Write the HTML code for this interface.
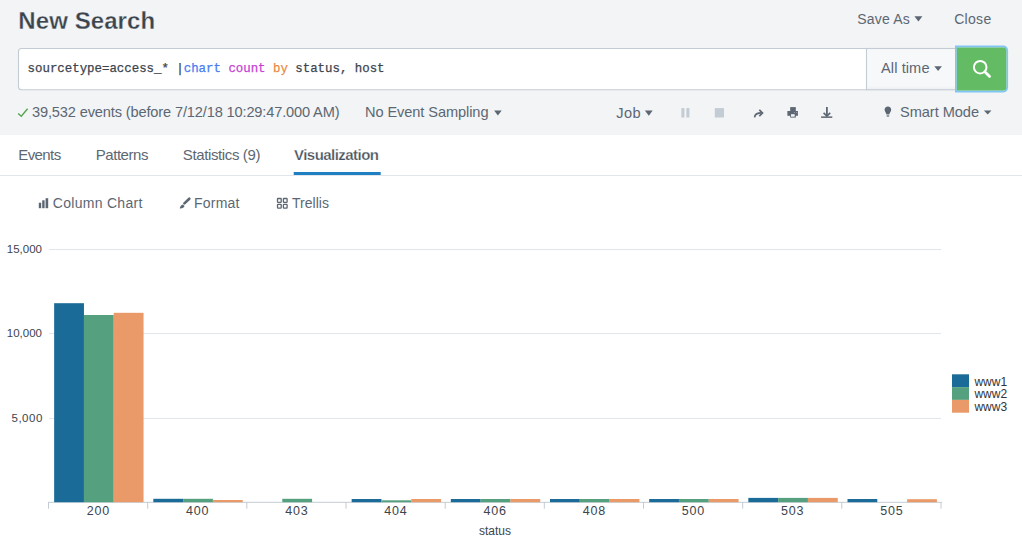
<!DOCTYPE html>
<html><head><meta charset="utf-8">
<style>
html,body{margin:0;padding:0;}
body{width:1022px;height:549px;overflow:hidden;position:relative;background:#fff;font-family:"Liberation Sans",sans-serif;}
svg{position:absolute;left:0;top:0;}
text{font-family:"Liberation Sans",sans-serif;white-space:pre;}
.g{fill:#5c6773;font-size:14px;}
.m{font-family:"Liberation Mono",monospace;font-size:12.4px;}
</style></head><body>
<svg width="1022" height="549" viewBox="0 0 1022 549">
<!-- header -->
<rect x="0" y="0" width="1022" height="135" fill="#f2f4f5"/>
<text x="18.3" y="28.8" font-size="24" font-weight="700" fill="#3c444d" stroke="#f2f4f5" stroke-width="0.3" textLength="136.8" lengthAdjust="spacing">New Search</text>
<text class="g" x="857.2" y="23.8" textLength="52.5" lengthAdjust="spacing">Save As</text>
<path d="M914.4 16.3 H922.4 L918.4 21.6 Z" fill="#5c6773"/>
<text class="g" x="954.2" y="23.8" textLength="37" lengthAdjust="spacing">Close</text>

<!-- search bar -->
<path d="M866.5 48.5 H21.5 A3 3 0 0 0 18.5 51.5 V86.8 A3 3 0 0 0 21.5 89.8 H866.5" fill="#fff" stroke="#c3cbd4" stroke-width="1.1"/>
<defs><linearGradient id="atg" x1="0" y1="0" x2="0" y2="1"><stop offset="0" stop-color="#f7f8fa"/><stop offset="0.9" stop-color="#f7f8fa"/><stop offset="1" stop-color="#eceef1"/></linearGradient></defs>
<rect x="866.5" y="48.5" width="92" height="41.3" fill="url(#atg)" stroke="#c3cbd4" stroke-width="1.1"/>
<text class="m" x="27.6" y="71.9" fill="#3c444d" stroke="#3c444d" stroke-width="0.25">sourcetype=access_* |<tspan fill="#4a7cf2" stroke="#4a7cf2">chart</tspan> <tspan fill="#c73fd3" stroke="#c73fd3">count</tspan> <tspan fill="#ea8a44" stroke="#ea8a44">by</tspan> status, host</text>
<text class="g" x="881" y="73.4" style="font-size:14.6px" textLength="48.5" lengthAdjust="spacing">All time</text>
<path d="M934.3 66.2 H941.9 L938.1 71 Z" fill="#5c6773"/>
<path d="M955.9 46.5 H1003.3 A3.9 3.9 0 0 1 1007.2 50.4 V87.6 A3.9 3.9 0 0 1 1003.3 91.5 H955.9 Z" fill="none" stroke="#80c6f4" stroke-width="1.8"/>
<path d="M956.8 47.4 H1003.3 A3 3 0 0 1 1006.3 50.4 V87.5 A3 3 0 0 1 1003.3 90.5 H956.8 Z" fill="#63bb63"/>
<circle cx="980.2" cy="67.2" r="6.3" fill="none" stroke="#fff" stroke-width="2"/>
<path d="M984.8 71.8 L989.6 76.4" stroke="#fff" stroke-width="2.8" stroke-linecap="round"/>

<!-- status row -->
<path d="M18.2 113.4 L21.3 116.3 L27.6 108.7" fill="none" stroke="#56a552" stroke-width="1.4"/>
<text class="g" x="32" y="117" style="font-size:14.6px" textLength="307.6" lengthAdjust="spacing">39,532 events (before 7/12/18 10:29:47.000 AM)</text>
<text class="g" x="365" y="117" style="font-size:14.6px" textLength="123.5" lengthAdjust="spacing">No Event Sampling</text>
<path d="M494.1 110.6 H501.7 L497.9 115.6 Z" fill="#5c6773"/>
<text class="g" x="616.2" y="117.6" style="font-size:14.6px" textLength="24.5" lengthAdjust="spacing">Job</text>
<path d="M644.9 110.6 H652.7 L648.8 115.7 Z" fill="#5c6773"/>
<!-- pause / stop -->
<rect x="681.4" y="108.1" width="3" height="9.4" fill="#c3cbd4"/>
<rect x="686.4" y="108.1" width="3" height="9.4" fill="#c3cbd4"/>
<rect x="714.8" y="108.1" width="9.2" height="9.4" fill="#c3cbd4"/>
<!-- share -->
<path d="M754.6 117.4 C754.7 114.3 756.6 112.9 761.8 112.9" fill="none" stroke="#5c6773" stroke-width="1.7"/>
<path d="M759.3 109.8 L762.5 113 L759.3 116.2" fill="none" stroke="#5c6773" stroke-width="1.7"/>
<!-- print -->
<rect x="790.2" y="107.1" width="5.6" height="10.5" fill="#5c6773"/>
<rect x="787.4" y="111" width="10.5" height="4.8" fill="#5c6773"/>
<rect x="791" y="114.2" width="3.7" height="2.5" fill="#f2f4f5"/>
<rect x="794.1" y="112.1" width="0.9" height="0.9" fill="#9aa4ae"/>
<rect x="796.1" y="112.1" width="0.9" height="0.9" fill="#9aa4ae"/>
<!-- download -->
<path d="M826.9 107 V116" stroke="#5c6773" stroke-width="1.8"/>
<path d="M823.6 112.9 L826.9 116 L830.2 112.9" fill="none" stroke="#5c6773" stroke-width="1.7"/>
<rect x="821.1" y="116.4" width="11.2" height="1.5" fill="#5c6773"/>
<!-- bulb -->
<path d="M887.9 106.5 C889.9 106.5 891.2 107.9 891.2 109.7 C891.2 111.3 889.8 112.4 889.4 114.2 L886.4 114.2 C886 112.4 884.6 111.3 884.6 109.7 C884.6 107.9 885.9 106.5 887.9 106.5 Z" fill="#5c6773"/>
<rect x="886.5" y="114.6" width="2.8" height="0.6" fill="#8f98a2"/>
<rect x="886.7" y="115.4" width="2.4" height="1.2" fill="#5c6773"/>
<text class="g" x="900" y="117" style="font-size:14.6px" textLength="79" lengthAdjust="spacing">Smart Mode</text>
<path d="M983.9 110.4 H991.5 L987.7 114.6 Z" fill="#5c6773"/>

<!-- tabs -->
<rect x="0" y="175" width="1022" height="1" fill="#e1e6eb"/>
<text class="g" x="18.2" y="160" style="font-size:15px" textLength="43" lengthAdjust="spacing">Events</text>
<text class="g" x="95.8" y="160" style="font-size:15px" textLength="52.6" lengthAdjust="spacing">Patterns</text>
<text class="g" x="182.8" y="160" style="font-size:15px" textLength="77.6" lengthAdjust="spacing">Statistics (9)</text>
<text x="294" y="160" font-size="15" font-weight="700" fill="#48515b" stroke="#fff" stroke-width="0.25" textLength="85" lengthAdjust="spacing">Visualization</text>
<rect x="293.7" y="172" width="87" height="3" fill="#1e7fc2"/>

<!-- toolbar -->
<rect x="38.8" y="202.7" width="2.4" height="5.5" fill="#5c6773"/>
<rect x="42.2" y="200.3" width="2.4" height="7.9" fill="#5c6773"/>
<rect x="45.6" y="198.2" width="2.6" height="10" fill="#5c6773"/>
<text class="g" x="52.8" y="208.4" textLength="89.5" lengthAdjust="spacing">Column Chart</text>
<path d="M184.4 203.4 L189.3 198.7" stroke="#5c6773" stroke-width="2.6" stroke-linecap="round"/>
<path d="M182.9 204.4 L184.5 206 C184.2 207.6 182.2 208.6 179.8 208.4 C179.9 206.5 181.1 204.8 182.9 204.4 Z" fill="#5c6773"/>
<text class="g" x="194" y="208.4" textLength="45.5" lengthAdjust="spacing">Format</text>
<g fill="none" stroke="#5c6773" stroke-width="1.3">
<rect x="277.5" y="198.5" width="3.7" height="3.8" rx="0.6"/>
<rect x="283.4" y="198.5" width="3.7" height="3.8" rx="0.6"/>
<rect x="277.5" y="204.4" width="3.7" height="3.8" rx="0.6"/>
<rect x="283.4" y="204.4" width="3.7" height="3.8" rx="0.6"/>
</g>
<text class="g" x="292" y="208.4" textLength="37" lengthAdjust="spacing">Trellis</text>

<!-- chart -->
<g fill="#e1e6eb">
<rect x="49" y="249" width="892" height="1"/>
<rect x="49" y="333" width="892" height="1"/>
<rect x="49" y="418" width="892" height="1"/>
</g>
<g font-size="11.5" fill="#3c444d" text-anchor="end">
<text x="42" y="253">15,000</text>
<text x="42" y="337.3">10,000</text>
<text x="42.3" y="422.3" textLength="30.8" lengthAdjust="spacing">5,000</text>
</g>
<rect x="48" y="501.8" width="894" height="1" fill="#c3cbd4"/>
<g fill="#c3cbd4">
<rect x="48" y="502" width="1" height="6.7"/>
<rect x="147.2" y="502" width="1" height="6.7"/>
<rect x="246.3" y="502" width="1" height="6.7"/>
<rect x="345.5" y="502" width="1" height="6.7"/>
<rect x="444.7" y="502" width="1" height="6.7"/>
<rect x="543.8" y="502" width="1" height="6.7"/>
<rect x="643" y="502" width="1" height="6.7"/>
<rect x="742.2" y="502" width="1" height="6.7"/>
<rect x="841.3" y="502" width="1" height="6.7"/>
<rect x="940.5" y="502" width="1" height="6.7"/>
</g>
<g>
<rect x="54.15" y="303.2" width="29.8" height="199.00" fill="#1a6b98"/>
<rect x="83.95" y="315.0" width="29.8" height="187.20" fill="#55a17f"/>
<rect x="113.75" y="312.8" width="29.8" height="189.40" fill="#e99a68"/>
<rect x="153.32" y="498.8" width="29.8" height="3.40" fill="#1a6b98"/>
<rect x="183.12" y="498.8" width="29.8" height="3.40" fill="#55a17f"/>
<rect x="212.92" y="500.0" width="29.8" height="2.20" fill="#e99a68"/>
<rect x="282.29" y="498.8" width="29.8" height="3.40" fill="#55a17f"/>
<rect x="351.66" y="499.0" width="29.8" height="3.20" fill="#1a6b98"/>
<rect x="381.46" y="500.3" width="29.8" height="1.90" fill="#55a17f"/>
<rect x="411.26" y="499.0" width="29.8" height="3.20" fill="#e99a68"/>
<rect x="450.83" y="499.0" width="29.8" height="3.20" fill="#1a6b98"/>
<rect x="480.63" y="499.0" width="29.8" height="3.20" fill="#55a17f"/>
<rect x="510.43" y="499.0" width="29.8" height="3.20" fill="#e99a68"/>
<rect x="550.00" y="499.0" width="29.8" height="3.20" fill="#1a6b98"/>
<rect x="579.80" y="499.0" width="29.8" height="3.20" fill="#55a17f"/>
<rect x="609.60" y="499.0" width="29.8" height="3.20" fill="#e99a68"/>
<rect x="649.17" y="499.0" width="29.8" height="3.20" fill="#1a6b98"/>
<rect x="678.97" y="499.0" width="29.8" height="3.20" fill="#55a17f"/>
<rect x="708.77" y="499.0" width="29.8" height="3.20" fill="#e99a68"/>
<rect x="748.34" y="497.9" width="29.8" height="4.30" fill="#1a6b98"/>
<rect x="778.14" y="497.9" width="29.8" height="4.30" fill="#55a17f"/>
<rect x="807.94" y="497.9" width="29.8" height="4.30" fill="#e99a68"/>
<rect x="847.51" y="499.0" width="29.8" height="3.20" fill="#1a6b98"/>
<rect x="907.11" y="499.2" width="29.8" height="3.00" fill="#e99a68"/>
</g>
<g font-size="12.5" fill="#3c444d" text-anchor="middle" letter-spacing="0.8">
<text x="98.5" y="515">200</text>
<text x="197.7" y="515">400</text>
<text x="296.8" y="515">403</text>
<text x="396" y="515">404</text>
<text x="495.2" y="515">406</text>
<text x="594.3" y="515">408</text>
<text x="693.5" y="515">500</text>
<text x="792.7" y="515">503</text>
<text x="891.8" y="515">505</text>
</g>
<text x="495" y="535.4" font-size="12" fill="#3c444d" text-anchor="middle">status</text>

<!-- legend -->
<rect x="952" y="374.3" width="17" height="12.8" fill="#1a6b98"/>
<rect x="952" y="387.1" width="17" height="12.8" fill="#55a17f"/>
<rect x="952" y="399.9" width="17" height="12.8" fill="#e99a68"/>
<g font-size="12" fill="#333">
<text x="974.4" y="386">www1</text>
<text x="974.4" y="398.4">www2</text>
<text x="974.4" y="410.8">www3</text>
</g>
</svg>
</body></html>
